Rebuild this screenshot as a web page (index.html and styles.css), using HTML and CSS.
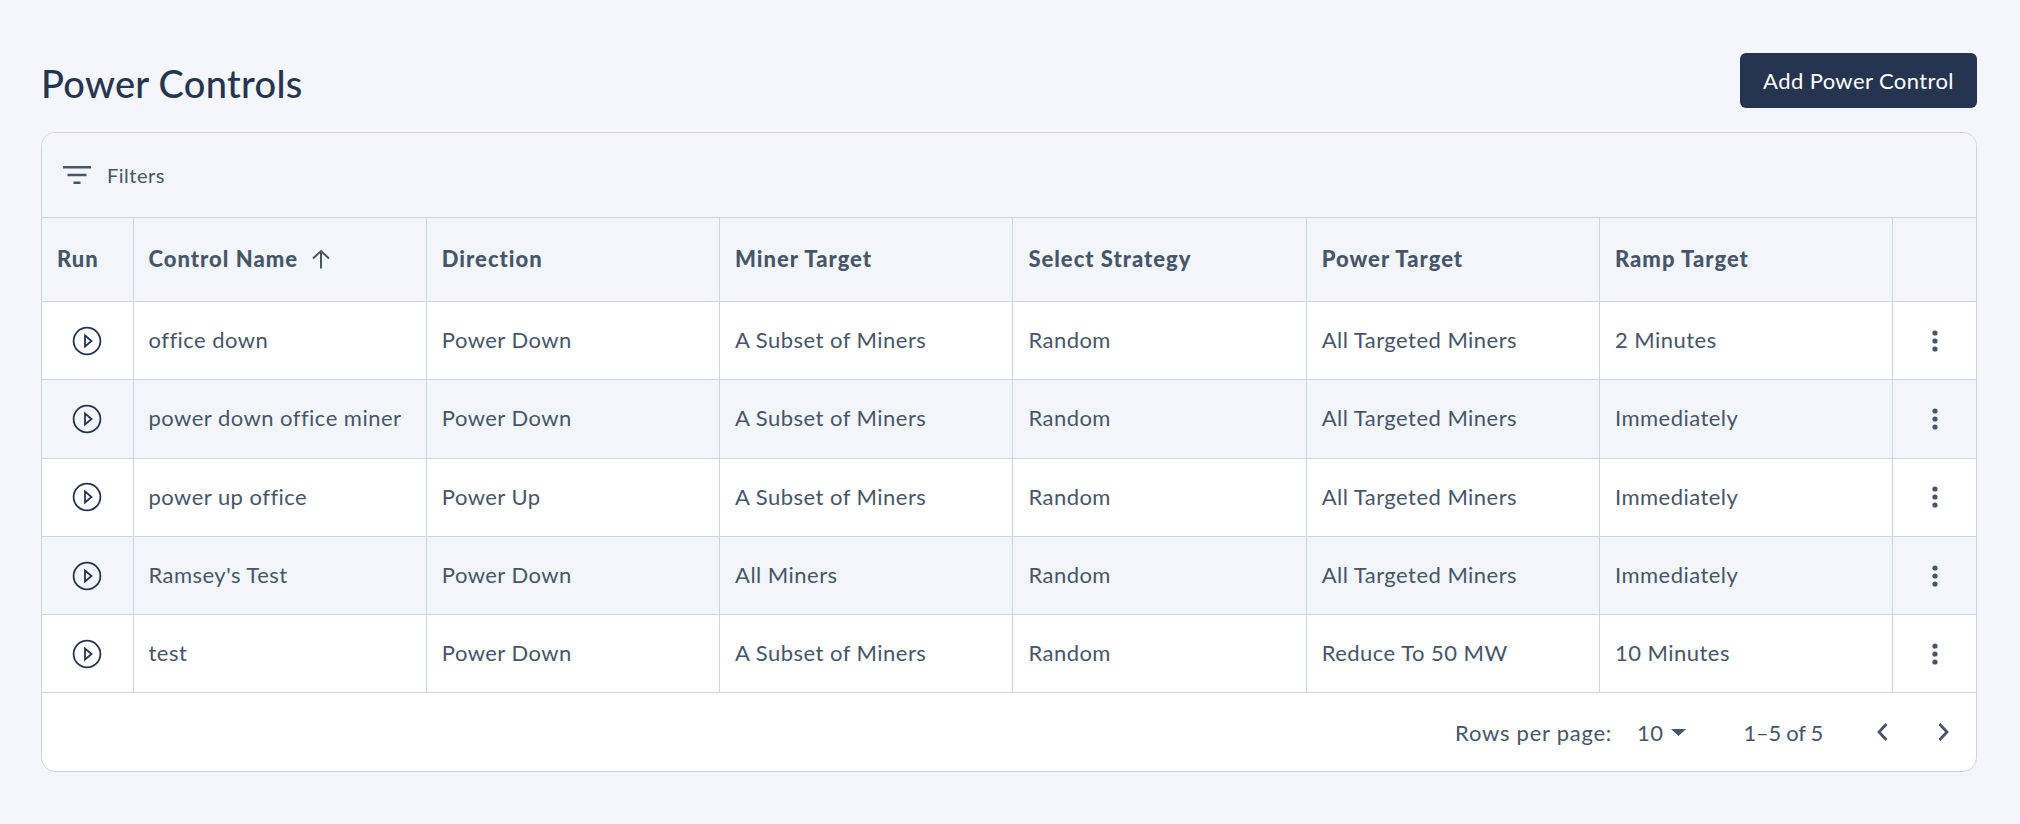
FILE: index.html
```html
<!DOCTYPE html>
<html>
<head>
    <title>Power Controls</title>
    <link rel="stylesheet" href="styles.css">
</head>
<body>
    <div class="page-head">
        <h1>Power Controls</h1>
        <button class="add-btn">Add Power Control</button>
    </div>
    <div class="card">
        <div class="filters">
            <svg class="filter-icon" width="28" height="18" viewBox="0 0 28 18"><path d="M0 1.300h28M4.500 9h19M10.500 16.700h7" stroke="#475569" stroke-width="2.600" fill="none"/></svg>
            <span>Filters</span>
        </div>
        <table>
            <colgroup>
                <col class="col-run">
                <col class="col-std">
                <col class="col-std">
                <col class="col-std">
                <col class="col-std">
                <col class="col-std">
                <col class="col-std">
                <col>
            </colgroup>
            <thead>
                <tr>
                    <th>Run</th>
                    <th><span class="sorted">Control Name
                        <svg width="20" height="20" viewBox="0 0 20 20"><path d="M10 19.500V2M2 9.500 10 2l8 7.500" stroke="#475569" stroke-width="2" fill="none"/></svg>
                    </span></th>
                    <th>Direction</th>
                    <th>Miner Target</th>
                    <th>Select Strategy</th>
                    <th>Power Target</th>
                    <th>Ramp Target</th>
                    <th></th>
                </tr>
            </thead>
            <tbody>
                <tr>
                    <td class="run"><svg class="play" width="30" height="30" viewBox="0 0 30 30"><circle cx="15" cy="15" r="13.400"/><path d="M13 9.500v11l6.500-5.500z"/></svg></td>
                    <td>office down</td><td>Power Down</td><td>A Subset of Miners</td><td>Random</td><td>All Targeted Miners</td><td>2 Minutes</td>
                    <td class="more"><svg width="8" height="24" viewBox="0 0 8 24"><circle cx="4" cy="4" r="2.600"/><circle cx="4" cy="12" r="2.600"/><circle cx="4" cy="20" r="2.600"/></svg></td>
                </tr>
                <tr>
                    <td class="run"><svg class="play" width="30" height="30" viewBox="0 0 30 30"><circle cx="15" cy="15" r="13.400"/><path d="M13 9.500v11l6.500-5.500z"/></svg></td>
                    <td>power down office miner</td><td>Power Down</td><td>A Subset of Miners</td><td>Random</td><td>All Targeted Miners</td><td>Immediately</td>
                    <td class="more"><svg width="8" height="24" viewBox="0 0 8 24"><circle cx="4" cy="4" r="2.600"/><circle cx="4" cy="12" r="2.600"/><circle cx="4" cy="20" r="2.600"/></svg></td>
                </tr>
                <tr>
                    <td class="run"><svg class="play" width="30" height="30" viewBox="0 0 30 30"><circle cx="15" cy="15" r="13.400"/><path d="M13 9.500v11l6.500-5.500z"/></svg></td>
                    <td>power up office</td><td>Power Up</td><td>A Subset of Miners</td><td>Random</td><td>All Targeted Miners</td><td>Immediately</td>
                    <td class="more"><svg width="8" height="24" viewBox="0 0 8 24"><circle cx="4" cy="4" r="2.600"/><circle cx="4" cy="12" r="2.600"/><circle cx="4" cy="20" r="2.600"/></svg></td>
                </tr>
                <tr>
                    <td class="run"><svg class="play" width="30" height="30" viewBox="0 0 30 30"><circle cx="15" cy="15" r="13.400"/><path d="M13 9.500v11l6.500-5.500z"/></svg></td>
                    <td>Ramsey's Test</td><td>Power Down</td><td>All Miners</td><td>Random</td><td>All Targeted Miners</td><td>Immediately</td>
                    <td class="more"><svg width="8" height="24" viewBox="0 0 8 24"><circle cx="4" cy="4" r="2.600"/><circle cx="4" cy="12" r="2.600"/><circle cx="4" cy="20" r="2.600"/></svg></td>
                </tr>
                <tr>
                    <td class="run"><svg class="play" width="30" height="30" viewBox="0 0 30 30"><circle cx="15" cy="15" r="13.400"/><path d="M13 9.500v11l6.500-5.500z"/></svg></td>
                    <td>test</td><td>Power Down</td><td>A Subset of Miners</td><td>Random</td><td>Reduce To 50 MW</td><td>10 Minutes</td>
                    <td class="more"><svg width="8" height="24" viewBox="0 0 8 24"><circle cx="4" cy="4" r="2.600"/><circle cx="4" cy="12" r="2.600"/><circle cx="4" cy="20" r="2.600"/></svg></td>
                </tr>
            </tbody>
        </table>
        <div class="pager">
            <span class="rows-label">Rows per page:</span>
            <span class="rows-select">10
                <svg width="15" height="7" viewBox="0 0 15 7"><path d="M0 0h15L7.500 7z" fill="#475569"/></svg>
            </span>
            <span class="range">1–5 of 5</span>
            <svg class="prev" width="11" height="18" viewBox="0 0 11 18"><path d="M9.500 1 2 9l7.500 8" stroke="#475569" stroke-width="2.800" fill="none"/></svg>
            <svg class="next" width="11" height="18" viewBox="0 0 11 18"><path d="M1.500 1 9 9l-7.500 8" stroke="#475569" stroke-width="2.800" fill="none"/></svg>
        </div>
    </div>
</body>
</html>
```

FILE: styles.css
```css
body {
    margin: 0;
    padding: 53px 43px 0 41px;
    background-color: #f4f6fb;
    font-family: Lato, Arial, sans-serif;
    font-size: 22px;
    letter-spacing: 0.47px;
    color: #475569;
}

.page-head {
    display: flex;
    justify-content: space-between;
    align-items: center;
    height: 55px;
    margin-bottom: 24px;
}

.page-head h1 {
    margin: 4px 0 0;
    font-size: 38px;
    font-weight: 500;
    letter-spacing: 0.28px;
    color: #26354f;
}

.add-btn {
    width: 237px;
    height: 55px;
    padding: 0;
    border: none;
    border-radius: 6px;
    background-color: #26354f;
    color: #fff;
    font: inherit;
    letter-spacing: 0.4px;
}

.card {
    border: 1.500px solid #cbd5e1;
    border-radius: 14px;
    overflow: hidden;
    background-color: #fff;
}

.filters {
    display: flex;
    align-items: center;
    gap: 16px;
    height: 84px;
    padding-left: 21px;
    background-color: #f2f5fa;
    font-size: 20px;
    letter-spacing: 0.5px;
}

table {
    width: 100%;
    border-collapse: collapse;
    table-layout: fixed;
}

.col-run {
    width: 91px;
}

.col-std {
    width: 293.300px;
}

th, td {
    padding: 0 15px;
    border: 1.500px solid #cbd5e1;
    text-align: left;
}

th:first-child, td:first-child {
    border-left: none;
}

th:last-child, td:last-child {
    border-right: none;
}

th {
    height: 81px;
    padding-bottom: 2px;
    background-color: #f2f5fa;
    font-weight: 900;
    letter-spacing: 1px;
}

td {
    height: 75.300px;
    padding-bottom: 2px;
}

tbody tr:nth-child(even) {
    background-color: #f2f5fa;
}

.sorted {
    display: flex;
    align-items: center;
    gap: 13px;
}

td.run {
    padding: 0;
    text-align: center;
}

.play {
    display: block;
    margin: 0 auto;
}

.play circle, .play path {
    fill: none;
    stroke: #26354f;
    stroke-width: 1.800;
}

td.more {
    padding: 0;
    text-align: center;
}

.more svg {
    display: block;
    margin: 0 auto;
    fill: #475569;
}

.pager {
    display: flex;
    align-items: center;
    justify-content: flex-end;
    height: 78px;
    padding-right: 27px;
}

.rows-label {
    letter-spacing: 0.75px;
}

.rows-select {
    display: flex;
    align-items: center;
    gap: 7px;
    margin-left: 25px;
}

.range {
    margin-left: 58px;
    letter-spacing: -0.3px;
}

.prev {
    margin-left: 54px;
}

.next {
    margin-left: 50px;
}
```
